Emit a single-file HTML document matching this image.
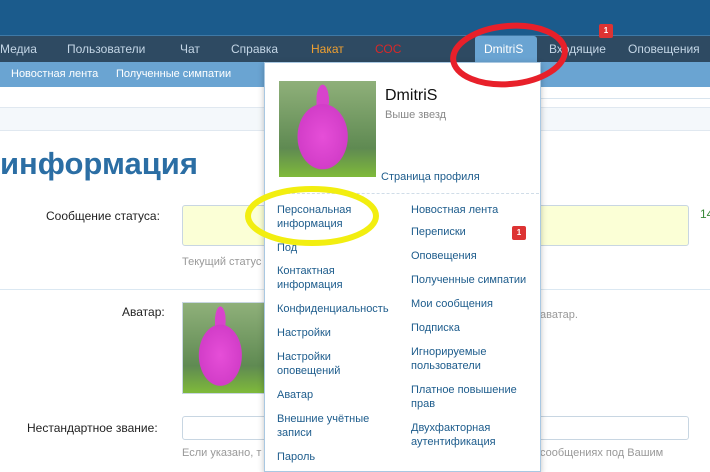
<!DOCTYPE html>
<html><head><meta charset="utf-8"><style>
*{margin:0;padding:0;box-sizing:border-box}
body{width:710px;height:465px;overflow:hidden;position:relative;background:#fff;font-family:"Liberation Sans",sans-serif;font-size:11px;color:#14416b}
.a{position:absolute;white-space:nowrap}
.top{left:0;top:0;width:710px;height:35px;background:#1b5b8c}
.nav{left:0;top:35px;width:710px;height:27px;background:#2e4a62;border-top:1px solid #3f79a6}
.nav span{position:absolute;top:6px;color:#c4d6e6;font-size:12px}
.sub{left:0;top:62px;width:710px;height:25px;background:#6aa4d2}
.sub span{position:absolute;top:6px;color:#fff;font-size:11px}
.ava{background:radial-gradient(ellipse 32% 42% at 45% 58%,#e64ed8 0,#d23dc8 80%,transparent 82%),radial-gradient(ellipse 8% 20% at 45% 20%,#d844cc 0,#d844cc 80%,transparent 82%),linear-gradient(#8fb07a,#5f8a52 70%,#7fba3a 100%)}
.dd{left:264px;top:62px;width:277px;height:410px;background:#fff;border:1px solid #a9c8e2;box-shadow:0 2px 6px rgba(0,0,0,.25)}
.dd div{position:absolute;line-height:14px;color:#1d5c8c;font-size:11px}
.lbl{color:#222;font-size:12px}
.inp{border:1px solid #c8d6e2;border-radius:3px}
</style></head><body>
<div class="a top"></div>
<div class="a nav">
<span style="left:0">Медиа</span><span style="left:67px">Пользователи</span><span style="left:180px">Чат</span><span style="left:231px">Справка</span><span style="left:311px;color:#f0a030">Накат</span><span style="left:375px;color:#d82828">СОС</span>
<span style="left:549px">Входящие</span><span style="left:628px">Оповещения</span>
</div>
<div class="a" style="left:475px;top:36px;width:62px;height:32px;background:#6aa4d2;border-radius:3px 3px 0 0"></div>
<div class="a" style="left:484px;top:42px;color:#fff;font-size:12px">DmitriS</div>
<div class="a" style="left:599px;top:24px;width:14px;height:14px;background:#d33;border-radius:2px;color:#fff;font-size:8px;font-weight:bold;text-align:center;line-height:14px">1</div>
<div class="a sub"><span style="left:11px">Новостная лента</span><span style="left:116px">Полученные симпатии</span></div>
<div class="a" style="left:540px;top:98px;width:170px;border-top:1px solid #d8e4ee"></div>
<div class="a" style="left:0;top:107px;width:710px;height:24px;background:#f4f8fb;border-top:1px solid #e0e8f0;border-bottom:1px solid #e0e8f0"></div>
<div class="a" style="left:0;top:146px;font-size:31px;font-weight:bold;color:#2b6ea4">информация</div>
<div class="a lbl" style="left:46px;top:209px">Сообщение статуса:</div>
<div class="a inp" style="left:182px;top:205px;width:507px;height:41px;background:#fbffd6"></div>
<div class="a" style="left:700px;top:207px;color:#3a8a3a;font-size:12px">14</div>
<div class="a" style="left:182px;top:256px;color:#999">Текущий статус</div>
<div class="a" style="left:0;top:289px;width:710px;border-top:1px solid #dbe8f2"></div>
<div class="a lbl" style="left:122px;top:305px">Аватар:</div>
<div class="a ava" style="left:182px;top:302px;width:85px;height:92px;border:1px solid #c8d6e2"></div>
<div class="a" style="left:540px;top:309px;color:#999">аватар.</div>
<div class="a lbl" style="left:27px;top:421px">Нестандартное звание:</div>
<div class="a inp" style="left:182px;top:416px;width:507px;height:24px"></div>
<div class="a" style="left:182px;top:447px;color:#999">Если указано, т</div>
<div class="a" style="left:540px;top:447px;color:#999">сообщениях под Вашим</div>
<div class="a dd">
<div class="ava" style="left:14px;top:18px;width:97px;height:96px"></div>
<div style="left:120px;top:24px;color:#111;font-size:16px;line-height:18px">DmitriS</div>
<div style="left:120px;top:45px;color:#888">Выше звезд</div>
<div style="left:116px;top:107px">Страница профиля</div>
<div style="left:12px;top:130px;width:262px;border-top:1px dashed #d0dde8"></div>
<div style="left:12px;top:140px">Персональная<br>информация</div>
<div style="left:12px;top:178px">Под</div>
<div style="left:12px;top:201px">Контактная<br>информация</div>
<div style="left:12px;top:239px">Конфиденциальность</div>
<div style="left:12px;top:263px">Настройки</div>
<div style="left:12px;top:287px">Настройки<br>оповещений</div>
<div style="left:12px;top:325px">Аватар</div>
<div style="left:12px;top:349px">Внешние учётные<br>записи</div>
<div style="left:12px;top:387px">Пароль</div>
<div style="left:146px;top:140px">Новостная лента</div>
<div style="left:146px;top:162px">Переписки</div>
<div style="left:247px;top:163px;width:14px;height:14px;background:#d33;border-radius:2px;color:#fff;font-size:8px;font-weight:bold;text-align:center;line-height:14px">1</div>
<div style="left:146px;top:186px">Оповещения</div>
<div style="left:146px;top:210px">Полученные симпатии</div>
<div style="left:146px;top:234px">Мои сообщения</div>
<div style="left:146px;top:258px">Подписка</div>
<div style="left:146px;top:282px">Игнорируемые<br>пользователи</div>
<div style="left:146px;top:320px">Платное повышение<br>прав</div>
<div style="left:146px;top:358px">Двухфакторная<br>аутентификация</div>
</div>
<svg class="a" style="left:0;top:0" width="710" height="465">
<ellipse cx="509" cy="55" rx="56" ry="29" fill="none" stroke="#e8202a" stroke-width="6" transform="rotate(-5 509 55)"/>
<ellipse cx="312" cy="216" rx="64" ry="27" fill="none" stroke="#f2ee10" stroke-width="6"/>
</svg>
</body></html>
